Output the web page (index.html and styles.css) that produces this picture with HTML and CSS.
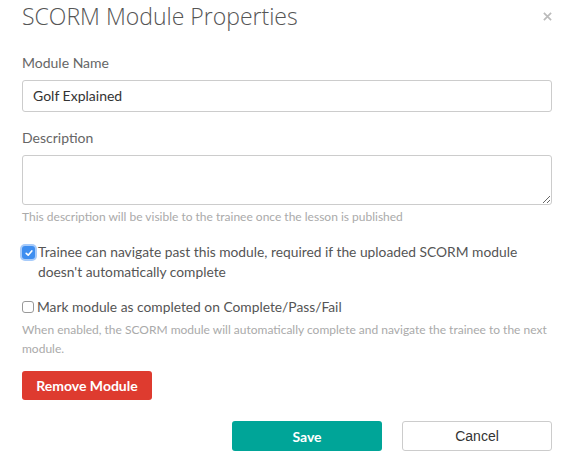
FILE: index.html
```html
<!DOCTYPE html>
<html>
<head>
<meta charset="utf-8">
<link rel="stylesheet" href="styles.css">
</head>
<body>
<div class="modal">
  <div class="header">
    <h1 class="title">SCORM Module Properties</h1>
    <span class="close"><svg viewBox="0 0 10 10" width="9" height="9"><path d="M1 1 L9 9 M9 1 L1 9" stroke="#bbb" stroke-width="1.9" stroke-linecap="butt"/></svg></span>
  </div>
  <div class="field">
    <label class="label">Module Name</label>
    <div class="input">Golf Explained</div>
  </div>
  <div class="field field-desc">
    <label class="label">Description</label>
    <textarea class="textarea"></textarea>
    <p class="help">This description will be visible to the trainee once the lesson is published</p>
  </div>
  <div class="check-row check-first">
    <span class="check checked"><svg viewBox="0 0 12 12" width="12" height="12"><path d="M3.2 6.3 L5.2 8.2 L8.8 3.9" fill="none" stroke="#fff" stroke-width="1.6" stroke-linecap="round" stroke-linejoin="round"/></svg></span>
    <span class="check-text">Trainee can navigate past this module, required if the uploaded SCORM module doesn't automatically complete</span>
  </div>
  <div class="check-row check-second">
    <span class="check"></span>
    <span class="check-text">Mark module as completed on Complete/Pass/Fail</span>
  </div>
  <p class="help help-wide">When enabled, the SCORM module will automatically complete and navigate the trainee to the next module.</p>
  <div class="remove-row">
    <button class="btn btn-danger">Remove Module</button>
  </div>
  <div class="footer">
    <button class="btn btn-save">Save</button>
    <button class="btn btn-cancel">Cancel</button>
  </div>
</div>
</body>
</html>
```
FILE: styles.css
```css
html, body {
  margin: 0;
  padding: 0;
  background: #fff;
}
body {
  font-family: Lato, "Liberation Sans", sans-serif;
  color: #666;
}
.modal {
  width: 575px;
  box-sizing: border-box;
  padding: 0 23px 0 22px;
  display: flex;
  flex-direction: column;
}
.header {
  display: flex;
  justify-content: space-between;
  align-items: flex-start;
  height: 53px;
}
.title {
  margin: 0;
  font-family: "Open Sans", sans-serif;
  font-weight: 300;
  font-size: 23px;
  line-height: 32px;
  color: #555;
}
.close {
  display: flex;
  margin-top: 12px;
}
.field {
  display: flex;
  flex-direction: column;
}
.label {
  font-size: 14px;
  line-height: 20px;
  color: #666;
  margin-bottom: 7px;
}
.input {
  height: 32px;
  box-sizing: border-box;
  border: 1px solid #ccc;
  border-radius: 3px;
  padding: 0 10px;
  font-size: 14px;
  line-height: 30px;
  color: #333;
}
.field-desc {
  margin-top: 16px;
}
.textarea {
  height: 50px;
  box-sizing: border-box;
  border: 1px solid #ccc;
  border-radius: 3px;
  margin: 0;
  resize: vertical;
  font-family: Lato, sans-serif;
}
.help {
  margin: 0;
  font-size: 12px;
  line-height: 18px;
  color: #aaa;
}
.field-desc .help {
  margin-top: 3px;
}
.check-row {
  display: flex;
  align-items: flex-start;
  gap: 3px;
}
.check-first {
  margin-top: 16px;
}
.check-second {
  margin-top: 15px;
}
.check-text {
  font-size: 13.8px;
  line-height: 20px;
  color: #555;
}
.check {
  flex: none;
  width: 12px;
  height: 12px;
  margin-top: 4px;
  box-sizing: border-box;
  border: 1px solid #999;
  border-radius: 3px;
  background: #fff;
  display: flex;
  align-items: center;
  justify-content: center;
}
.check.checked {
  width: 13px;
  height: 13px;
  border: none;
  background: #3e8ef0;
  box-shadow: 0 0 0 2px rgba(95, 160, 245, 0.55);
}
.help-wide {
  margin-top: 3px;
  line-height: 19px;
}
.remove-row {
  display: flex;
  margin-top: 13px;
}
.btn {
  height: 30px;
  box-sizing: border-box;
  border-radius: 3px;
  font-family: Lato, sans-serif;
  font-size: 14px;
  cursor: pointer;
}
.btn-danger {
  width: 130px;
  height: 29px;
  border: none;
  background: #de3b2f;
  color: #fff;
  font-weight: bold;
}
.footer {
  display: flex;
  justify-content: flex-end;
  gap: 20px;
  margin-top: 21px;
}
.btn-save {
  width: 150px;
  border: none;
  background: #00a598;
  color: #fff;
  font-weight: bold;
}
.btn-cancel {
  width: 150px;
  border: 1px solid #ccc;
  background: #fff;
  color: #333;
  font-family: "Liberation Sans", Arial, sans-serif;
}
```
